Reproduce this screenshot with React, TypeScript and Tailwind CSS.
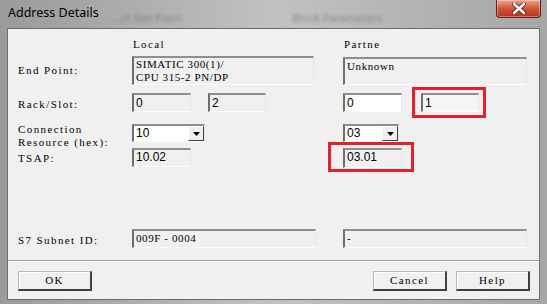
import React from 'react';

const label = "font-['Liberation_Serif',serif] text-[11px] tracking-[1.4px] text-black";
const serif = "font-['Liberation_Serif',serif] text-[11px] tracking-[0.6px] text-black";
const sans = "font-['Liberation_Sans',Arial,sans-serif] text-[12px] text-black";

interface FieldProps {
  className: string;
  white?: boolean;
  children?: React.ReactNode;
}

function Field({ className, white, children }: FieldProps) {
  return (
    <div
      className={`${className} border-t-2 border-l-2 border-b border-r border-t-[#8e8e8e] border-l-[#6e6e6e] border-b-[#fcfcfc] border-r-[#e6e6e6] ${
        white ? 'bg-white' : 'bg-[#f0f0f0]'
      } pl-[2px] overflow-hidden whitespace-nowrap`}
    >
      {children}
    </div>
  );
}

function Dropdown({ className, value }: { className: string; value: string }) {
  return (
    <div className={`${className} h-[18px] flex bg-white border-t-2 border-l-2 border-b border-r border-t-[#8e8e8e] border-l-[#6e6e6e] border-b-[#fcfcfc] border-r-[#e6e6e6]`}>
      <div className={`flex-1 pl-[2px] leading-[15px] ${sans}`}>{value}</div>
      <div className="w-[16px] h-full bg-[#f0f0f0] border-t border-l border-t-white border-l-white border-b border-r border-b-[#404040] border-r-[#404040] flex items-center justify-center">
        <svg width="7" height="4" viewBox="0 0 7 4">
          <path d="M0 0 H7 L3.5 4 Z" fill="#000" />
        </svg>
      </div>
    </div>
  );
}

function Button({ text }: { text: string }) {
  return (
    <div
      className={`w-[74px] h-[20px] bg-[#f0f0f0] border-t border-l border-t-[#b8b8b8] border-l-[#b8b8b8] border-b-2 border-r-2 border-b-[#404040] border-r-[#404040] shadow-[inset_1px_1px_0_#ffffff] flex items-center justify-center ${label}`}
    >
      {text}
    </div>
  );
}

export default function App() {
  return (
    <div className="w-[547px] h-[304px] overflow-hidden bg-gradient-to-r from-[#9a9a9a] via-[#c2c2c2] to-[#a6a6a6] flex flex-col">
      {/* Title bar */}
      <div className="h-[28px] flex items-start relative">
        <span className="ml-[8px] mt-[4px] font-['Noto_Sans',sans-serif] text-[12.5px] text-black leading-[18px]">
          Address Details
        </span>
        <span className="ml-[14px] mt-[10px] font-['Noto_Sans',sans-serif] text-[11px] text-[#5a5a5a] blur-[1.4px] opacity-50">
          ...ct Net Point
        </span>
        <span className="ml-[110px] mt-[10px] font-['Noto_Sans',sans-serif] text-[11px] text-[#5a5a5a] blur-[1.4px] opacity-50">
          Block Parameters
        </span>
        <div className="absolute left-[496px] top-0 w-[45px] h-[18px] rounded-b-[4px] border border-t-0 border-[#5e2418] bg-gradient-to-b from-[#e9a591] via-[#d0533a] to-[#b8331e] flex items-center justify-center shadow-[inset_0_0_0_1px_rgba(255,255,255,0.35)]">
          <svg width="14" height="11" viewBox="0 0 14 11">
            <path d="M2 1 L12 10 M12 1 L2 10" stroke="#4a1a12" strokeWidth="4" strokeLinecap="round" />
            <path d="M2 1 L12 10 M12 1 L2 10" stroke="#ffffff" strokeWidth="2.4" strokeLinecap="round" />
          </svg>
        </div>
      </div>

      {/* Client area */}
      <div className="ml-[7px] mr-[7px] h-[272px] bg-[#f0f0f0] border border-[#6f6f6f] flex flex-col pl-[10px]">
        {/* Column headings */}
        <div className="mt-[5px] h-[20px] flex items-center">
          <div className="w-[115px]" />
          <div className={`w-[211px] ${label}`}>Local</div>
          <div className={label}>Partne</div>
        </div>

        {/* End point */}
        <div className="mt-[2px] h-[29px] flex items-center">
          <div className={`w-[114px] ${label}`}>End Point:</div>
          <div className="w-[211px]">
            <Field className={`w-[182px] h-[29px] leading-[12.5px] ${serif}`}>
              SIMATIC 300(1)/
              <br />
              CPU 315-2 PN/DP
            </Field>
          </div>
          <Field className={`w-[184px] h-[28px] leading-[14px] ${serif}`}>Unknown</Field>
        </div>

        {/* Rack / slot */}
        <div className="mt-[8px] h-[19px] flex items-center">
          <div className={`w-[114px] pt-[3px] ${label}`}>Rack/Slot:</div>
          <div className="w-[211px] flex gap-[17px]">
            <Field className={`w-[59px] h-[19px] leading-[16px] ${sans}`}>0</Field>
            <Field className={`w-[58px] h-[19px] leading-[16px] ${sans}`}>2</Field>
          </div>
          <div className="flex gap-[19px]">
            <Field white className={`w-[59px] h-[19px] leading-[16px] ${sans}`}>0</Field>
            <div className="relative">
              <Field className={`w-[58px] h-[19px] leading-[16px] bg-[#f6f6f6] ${sans}`}>1</Field>
              <div className="absolute left-[-9px] right-[-7px] top-[-6px] bottom-[-6px] border-[3px] border-[#e3202b]" />
            </div>
          </div>
        </div>

        {/* Connection resource */}
        <div className="mt-[12px] h-[18px] flex items-start">
          <div className={`w-[114px] -mt-[1px] leading-[13px] ${label}`}>
            Connection
            <br />
            Resource (hex):
          </div>
          <div className="w-[211px]">
            <Dropdown className="w-[73px]" value="10" />
          </div>
          <Dropdown className="w-[56px]" value="03" />
        </div>

        {/* TSAP */}
        <div className="mt-[6px] h-[19px] flex items-center">
          <div className={`w-[114px] pt-[2px] ${label}`}>TSAP:</div>
          <div className="w-[211px]">
            <Field className={`w-[59px] h-[19px] leading-[15px] ${sans}`}>10.02</Field>
          </div>
          <div className="relative">
            <Field className={`w-[59px] h-[20px] leading-[15px] ${sans}`}>03.01</Field>
            <div className="absolute left-[-15px] right-[-12px] top-[-6px] bottom-[-4px] border-[3px] border-[#e3202b]" />
          </div>
        </div>

        {/* S7 subnet */}
        <div className="mt-[62px] h-[19px] flex items-center">
          <div className={`w-[114px] pt-[3px] ${label}`}>S7 Subnet ID:</div>
          <div className="w-[211px]">
            <Field className={`w-[184px] h-[19px] leading-[15px] ${serif}`}>009F - 0004</Field>
          </div>
          <Field className={`w-[184px] h-[19px] leading-[15px] ${serif}`}>-</Field>
        </div>

        {/* Separator */}
        <div className="mt-[12px] -ml-[10px] h-[2px] border-t border-t-[#a0a0a0] border-b border-b-white" />

        {/* Buttons */}
        <div className="mt-[9px] flex items-center">
          <Button text="OK" />
          <div className="flex-1" />
          <div className="flex gap-[9px] mr-[9px]">
            <Button text="Cancel" />
            <Button text="Help" />
          </div>
        </div>
      </div>
    </div>
  );
}
